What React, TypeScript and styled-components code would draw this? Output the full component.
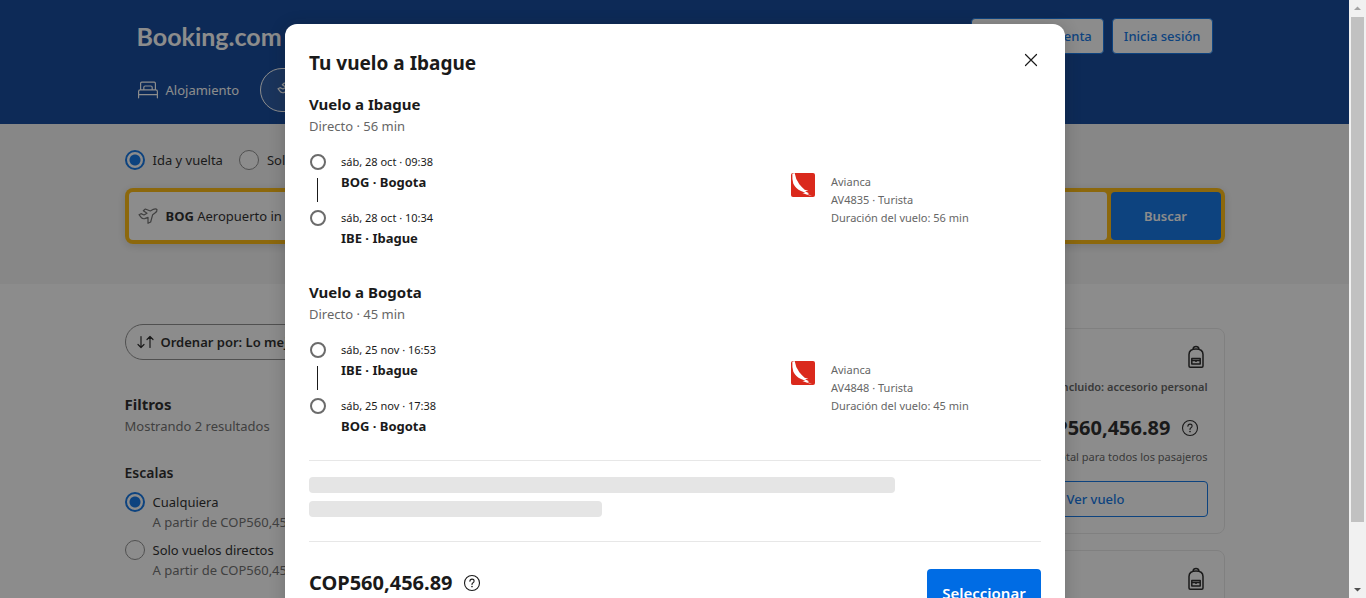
import React from "react";
import styled, { createGlobalStyle, css } from "styled-components";

const GlobalStyle = createGlobalStyle`
  *, *::before, *::after { box-sizing: border-box; }
  body {
    margin: 0;
    overflow: hidden;
    background: #fff;
    color: #1a1a1a;
    font-family: "Noto Sans", "Open Sans", sans-serif;
    font-size: 13px;
    line-height: 20px;
  }
  button, input { font: inherit; color: inherit; }
  h1, h2, h3, p, ul, fieldset, legend { margin: 0; padding: 0; border: 0; }
  ul { list-style: none; }
  svg { display: block; flex: none; }
`;

const Shell = styled.div`
  display: flex;
  height: 100vh;
`;

const Page = styled.div`
  position: relative;
  flex: 1;
  min-width: 0;
  overflow: hidden;
`;

const Container = styled.div`
  width: 100%;
  max-width: 1100px;
  margin: 0 auto;
`;

/* Header */

const Header = styled.header`
  padding: 18px 0 12px;
  background: #003b95;
  color: #fff;
`;

const TopBar = styled.div`
  display: flex;
  align-items: center;
  justify-content: space-between;
  padding: 0 12px;
  margin-bottom: 14px;
`;

const Logo = styled.a`
  color: #fff;
  font-family: Lato, sans-serif;
  font-size: 25px;
  font-weight: 700;
  line-height: 36px;
  text-decoration: none;
`;

const Actions = styled.div`
  display: flex;
  gap: 8px;
`;

const HeaderButton = styled.button`
  height: 36px;
  padding: 0 11px;
  border: 1px solid #006ce4;
  border-radius: 4px;
  background: #fff;
  color: #006ce4;
  font-weight: 500;
`;

const Nav = styled.nav`
  display: flex;
  gap: 4px;
  margin: 0 -4px;
`;

const NavLink = styled.a<{ $active?: boolean }>`
  display: flex;
  align-items: center;
  gap: 8px;
  height: 44px;
  padding: 0 16px;
  border: 1px solid ${(p) => (p.$active ? "#fff" : "transparent")};
  border-radius: 22px;
  background: ${(p) => (p.$active ? "rgba(255,255,255,.1)" : "none")};
  color: #fff;
  text-decoration: none;
`;

/* Search */

const SearchBand = styled.section`
  padding: 26px 0 40px;
  background: #f5f5f5;
`;

const TripTypes = styled.fieldset`
  display: flex;
  gap: 16px;
  margin-bottom: 18px;
`;

const RadioLabel = styled.label`
  display: flex;
  gap: 8px;
`;

const Radio = styled.input.attrs({ type: "radio" })`
  appearance: none;
  flex: none;
  width: 20px;
  height: 20px;
  margin: 0;
  border: 1px solid #868686;
  border-radius: 50%;
  background: #fff;
  &:checked {
    border: 2px solid #006ce4;
    background: radial-gradient(circle, #006ce4 5px, #fff 6px);
  }
`;

const SearchBox = styled.form`
  display: flex;
  gap: 4px;
  padding: 4px;
  border-radius: 8px;
  background: #ffb700;
  box-shadow: 0 2px 8px rgba(26, 26, 26, 0.16);
`;

const SearchField = styled.button`
  display: flex;
  flex: 1;
  align-items: center;
  gap: 8px;
  height: 48px;
  padding: 0 9px;
  border: 0;
  border-radius: 4px;
  background: #fff;
  text-align: left;
`;

const Primary = styled.button<{ $wide?: boolean }>`
  height: 48px;
  width: ${(p) => (p.$wide ? "114px" : "110px")};
  border: 0;
  border-radius: 4px;
  background: #006ce4;
  color: #fff;
  font-size: ${(p) => (p.$wide ? "15px" : "13px")};
  font-weight: 600;
`;

/* Results */

const Results = styled(Container)`
  display: flex;
  gap: 24px;
  padding-top: 40px;
`;

const Sidebar = styled.aside`
  width: 260px;
`;

const SortButton = styled.button`
  display: flex;
  align-items: center;
  gap: 7px;
  height: 36px;
  padding: 0 11px;
  margin-bottom: 32px;
  border: 1px solid #868686;
  border-radius: 18px;
  background: none;
  font-weight: 600;
  white-space: nowrap;
`;

const Muted = styled.p`
  color: #666;
`;

const FilterTitle = styled.h2`
  font-size: 15px;
  font-weight: 700;
  line-height: 24px;
`;

const FilterGroup = styled.fieldset`
  display: grid;
  gap: 8px;
  margin-top: 27px;
`;

const FilterLegend = styled.legend`
  margin-bottom: 9px;
  font-size: 14px;
  font-weight: 600;
`;

const CardList = styled.ul`
  display: grid;
  flex: 1;
  gap: 16px;
  padding-top: 4px;
`;

const Card = styled.li`
  display: flex;
  flex-direction: column;
  align-items: flex-end;
  height: 206px;
  padding: 16px;
  border: 1px solid #e7e7e7;
  border-radius: 8px;
`;

const BagSlot = styled.div`
  height: 33px;
`;

const CardNote = styled.p<{ $strong?: boolean }>`
  color: #595959;
  font-size: 11px;
  font-weight: ${(p) => (p.$strong ? 600 : 400)};
  line-height: 18px;
`;

const PriceRow = styled.div<{ $inCard?: boolean }>`
  display: flex;
  align-items: center;
  gap: 10px;
  font-size: 20px;
  font-weight: 700;
  line-height: 32px;
  ${(p) =>
    p.$inCard &&
    css`
      padding: 16px 9px 4px 0;
    `}
`;

const HelpButton = styled.button`
  padding: 0;
  border: 0;
  background: none;
`;

const OutlineButton = styled.button`
  width: 224px;
  height: 36px;
  margin-top: 15px;
  border: 1px solid #006ce4;
  border-radius: 4px;
  background: none;
  color: #006ce4;
  font-weight: 500;
`;

/* Dialog */

const Overlay = styled.div`
  position: absolute;
  inset: 0;
  overflow: hidden;
  padding: 24px 24px 24px 25px;
  background: rgba(26, 26, 26, 0.5);
`;

const Dialog = styled.div`
  width: 100%;
  max-width: 780px;
  margin: 0 auto;
  padding: 24px;
  border-radius: 12px;
  background: #fff;
  box-shadow: 0 2px 16px rgba(26, 26, 26, 0.24);
`;

const DialogHeader = styled.div`
  display: flex;
  align-items: flex-start;
  justify-content: space-between;
  margin-bottom: 14px;
`;

const DialogTitle = styled.h1`
  font-size: 19px;
  font-weight: 700;
  line-height: 30px;
`;

const CloseButton = styled.button`
  padding: 2px 0;
  border: 0;
  background: none;
`;

const Leg = styled.section`
  & + & {
    margin-top: 32px;
  }
`;

const LegTitle = styled.h2`
  font-size: 15px;
  font-weight: 700;
  line-height: 24px;
`;

const LegBody = styled.div`
  display: grid;
  grid-template-columns: 1fr 250px;
  align-items: center;
  margin-top: 16px;
`;

const Stops = styled.ul`
  display: grid;
  gap: 16px;
`;

const Stop = styled.li`
  display: grid;
  grid-template-columns: 16px 1fr;
  column-gap: 15px;
  padding-left: 1px;
`;

const Track = styled.div<{ $line?: boolean }>`
  position: relative;
  &::before {
    content: "";
    display: block;
    width: 16px;
    height: 16px;
    margin-top: 2px;
    border: 2px solid #6b6b6b;
    border-radius: 50%;
  }
  ${(p) =>
    p.$line &&
    css`
      &::after {
        content: "";
        position: absolute;
        top: 26px;
        left: 7px;
        width: 1px;
        height: 24px;
        background: #1a1a1a;
      }
    `}
`;

const StopTime = styled.p`
  font-size: 11px;
`;

const StopPlace = styled.p`
  font-weight: 700;
`;

const Carrier = styled.div`
  display: flex;
  gap: 16px;
`;

const CarrierText = styled.div`
  color: #666;
  font-size: 11px;
  line-height: 18px;
`;

const Divider = styled.hr<{ $gap: number }>`
  height: 1px;
  margin: 24px 0 ${(p) => p.$gap}px;
  border: 0;
  background: #e7e7e7;
`;

const Skeleton = styled.div<{ $width: string }>`
  width: ${(p) => p.$width};
  height: 16px;
  border-radius: 4px;
  background: #e5e5e5;
  & + & {
    margin-top: 8px;
  }
`;

const DialogFooter = styled.div`
  display: flex;
  align-items: center;
  justify-content: space-between;
`;

/* Scrollbar */

const ScrollRail = styled.div`
  display: flex;
  flex: none;
  flex-direction: column;
  align-items: center;
  width: 17px;
  background: #f1f1f1;
`;

const ScrollThumb = styled.div`
  flex: 1;
  width: 13px;
  margin-bottom: 59px;
  background: #c1c1c1;
`;

const BedIcon = () => (
  <svg width="20" height="20" viewBox="0 0 20 20" fill="none" stroke="currentColor" strokeWidth="1.2">
    <path d="M2.6 10V3.4Q2.6 2.2 3.8 2.2H16.2Q17.4 2.2 17.4 3.4V10M.6 17.8V11.4Q.6 9.8 2.2 9.8H17.8Q19.4 9.8 19.4 11.4V17.8M.6 14.6H19.4M5.8 9.8V7.4Q5.8 6 7.2 6H12.8Q14.2 6 14.2 7.4V9.8" strokeLinecap="round" />
  </svg>
);

const PlaneIcon = () => (
  <svg width="20" height="20" viewBox="0 0 60 60" fill="none" stroke="currentColor" strokeWidth="3.6" strokeLinejoin="round" strokeLinecap="round">
    <path d="M3 26L9 23L18 27L27 22L16 14L22 9L37 15L46 10Q54 7 57 11Q58 16 51 21L44 26L38 48L30 52L30 34L20 38Q13 39 10 35Z" />
  </svg>
);

const SortIcon = () => (
  <svg width="17" height="16" viewBox="0 0 17 16" fill="none" stroke="currentColor" strokeWidth="1.2" strokeLinecap="round" strokeLinejoin="round">
    <path d="M4 2.5V13.5M1 10.5L4 13.5L7 10.5M13 13.5V2.5M10 5.5L13 2.5L16 5.5" />
  </svg>
);

const BagIcon = () => (
  <svg width="24" height="24" viewBox="0 0 24 24" fill="none" stroke="currentColor" strokeWidth="1.5" strokeLinejoin="round">
    <path d="M5 21V9.5Q5 4 12 4Q19 4 19 9.5V21Q19 22.2 17.8 22.2H6.2Q5 22.2 5 21ZM9 4.2Q9.4 1.6 12 1.6Q14.6 1.6 15 4.2" />
    <path d="M7.8 13.5H16.2V19H7.8ZM7.8 15.5H16.2M12 15.5V17" />
  </svg>
);

const HelpIcon = () => (
  <svg width="18" height="18" viewBox="0 0 18 18" fill="none" stroke="currentColor" strokeWidth="1.1" strokeLinecap="round">
    <circle cx="9" cy="9" r="7.5" />
    <path d="M6.9 7.2Q7 5.100 9 5.100Q11.1 5.1 11.1 7Q11.1 8.1 10 8.7Q9 9.2 9 10.4" />
    <circle cx="9" cy="12.6" r=".8" fill="currentColor" stroke="none" />
  </svg>
);

const CloseIcon = () => (
  <svg width="20" height="20" viewBox="0 0 20 20" stroke="currentColor" strokeWidth="1.2" strokeLinecap="round">
    <path d="M4.5 4.5L15.5 15.5M15.5 4.5L4.5 15.5" />
  </svg>
);

const AviancaLogo = () => (
  <svg width="24" height="24" viewBox="0 0 72 72" role="img" aria-label="Avianca">
    <rect width="72" height="72" rx="6" fill="#da291c" />
    <path d="M4 2L11 0Q14 20 25 34Q34 45 41 50L52 53L42 55L54 61L49 63L64 70Q48 66 34 60L43 59L30 54Q14 46 7 32Q3 20 4 2Z" fill="#fff" />
  </svg>
);

const ScrollArrow = ({ up }: { up?: boolean }) => (
  <svg width="17" height="17" viewBox="0 0 17 17" fill={up ? "#a3a3a3" : "#505050"}>
    <path d={up ? "M5 10L8.5 6.5L12 10Z" : "M5 7H12L8.5 10.5Z"} />
  </svg>
);

const stayOptions = ["Cualquiera", "Solo vuelos directos"];

const legs = [
  {
    title: "Vuelo a Ibague",
    summary: "Directo · 56 min",
    flight: "AV4835 · Turista",
    duration: "56 min",
    stops: [
      { time: "sáb, 28 oct · 09:38", place: "BOG · Bogota" },
      { time: "sáb, 28 oct · 10:34", place: "IBE · Ibague" },
    ],
  },
  {
    title: "Vuelo a Bogota",
    summary: "Directo · 45 min",
    flight: "AV4848 · Turista",
    duration: "45 min",
    stops: [
      { time: "sáb, 25 nov · 16:53", place: "IBE · Ibague" },
      { time: "sáb, 25 nov · 17:38", place: "BOG · Bogota" },
    ],
  },
];

const Price = ({ inCard }: { inCard?: boolean }) => (
  <PriceRow $inCard={inCard}>
    COP560,456.89
    <HelpButton type="button" aria-label="Más información">
      <HelpIcon />
    </HelpButton>
  </PriceRow>
);

export default function App() {
  return (
    <Shell>
      <GlobalStyle />
      <Page>
        <Header>
          <Container>
            <TopBar>
              <Logo href="#">Booking.com</Logo>
              <Actions>
                <HeaderButton type="button">Hazte una cuenta</HeaderButton>
                <HeaderButton type="button">Inicia sesión</HeaderButton>
              </Actions>
            </TopBar>
            <Nav>
              <NavLink href="#">
                <BedIcon />
                Alojamiento
              </NavLink>
              <NavLink href="#" $active>
                <PlaneIcon />
                Vuelos
              </NavLink>
            </Nav>
          </Container>
        </Header>

        <SearchBand>
          <Container>
            <TripTypes>
              <RadioLabel>
                <Radio name="trip" defaultChecked />
                Ida y vuelta
              </RadioLabel>
              <RadioLabel>
                <Radio name="trip" />
                Solo ida
              </RadioLabel>
            </TripTypes>
            <SearchBox onSubmit={(e) => e.preventDefault()}>
              <SearchField type="button">
                <Muted as="span">
                  <PlaneIcon />
                </Muted>
                <span>
                  <b>BOG</b> Aeropuerto in
                </span>
              </SearchField>
              <Primary type="submit">Buscar</Primary>
            </SearchBox>
          </Container>
        </SearchBand>

        <Results as="main">
          <Sidebar>
            <SortButton type="button">
              <SortIcon />
              Ordenar por: Lo mejor
            </SortButton>
            <FilterTitle>Filtros</FilterTitle>
            <Muted>Mostrando 2 resultados</Muted>
            <FilterGroup>
              <FilterLegend>Escalas</FilterLegend>
              {stayOptions.map((option, i) => (
                <RadioLabel key={option}>
                  <Radio name="stops" defaultChecked={i === 0} />
                  <span>
                    {option}
                    <Muted>A partir de COP560,456.89</Muted>
                  </span>
                </RadioLabel>
              ))}
            </FilterGroup>
          </Sidebar>
          <CardList>
            {[0, 1].map((i) => (
              <Card key={i}>
                <BagSlot>
                  <BagIcon />
                </BagSlot>
                <CardNote $strong>Incluido: accesorio personal</CardNote>
                <Price inCard />
                <CardNote>Total para todos los pasajeros</CardNote>
                <OutlineButton type="button">Ver vuelo</OutlineButton>
              </Card>
            ))}
          </CardList>
        </Results>

        <Overlay>
          <Dialog role="dialog" aria-modal="true" aria-labelledby="dialog-title">
            <DialogHeader>
              <DialogTitle id="dialog-title">Tu vuelo a Ibague</DialogTitle>
              <CloseButton type="button" aria-label="Cerrar">
                <CloseIcon />
              </CloseButton>
            </DialogHeader>
            {legs.map((leg) => (
              <Leg key={leg.title}>
                <LegTitle>{leg.title}</LegTitle>
                <Muted>{leg.summary}</Muted>
                <LegBody>
                  <Stops>
                    {leg.stops.map((stop, i) => (
                      <Stop key={stop.time}>
                        <Track $line={i === 0} />
                        <div>
                          <StopTime>{stop.time}</StopTime>
                          <StopPlace>{stop.place}</StopPlace>
                        </div>
                      </Stop>
                    ))}
                  </Stops>
                  <Carrier>
                    <AviancaLogo />
                    <CarrierText>
                      <p>Avianca</p>
                      <p>{leg.flight}</p>
                      <p>Duración del vuelo: {leg.duration}</p>
                    </CarrierText>
                  </Carrier>
                </LegBody>
              </Leg>
            ))}
            <Divider $gap={16} />
            <Skeleton $width="80%" />
            <Skeleton $width="40%" />
            <Divider $gap={25} />
            <DialogFooter>
              <div>
                <Price />
                <Muted>Total para todos los pasajeros</Muted>
              </div>
              <Primary type="button" $wide>
                Seleccionar
              </Primary>
            </DialogFooter>
          </Dialog>
        </Overlay>
      </Page>
      <ScrollRail aria-hidden="true">
        <ScrollArrow up />
        <ScrollThumb />
        <ScrollArrow />
      </ScrollRail>
    </Shell>
  );
}
